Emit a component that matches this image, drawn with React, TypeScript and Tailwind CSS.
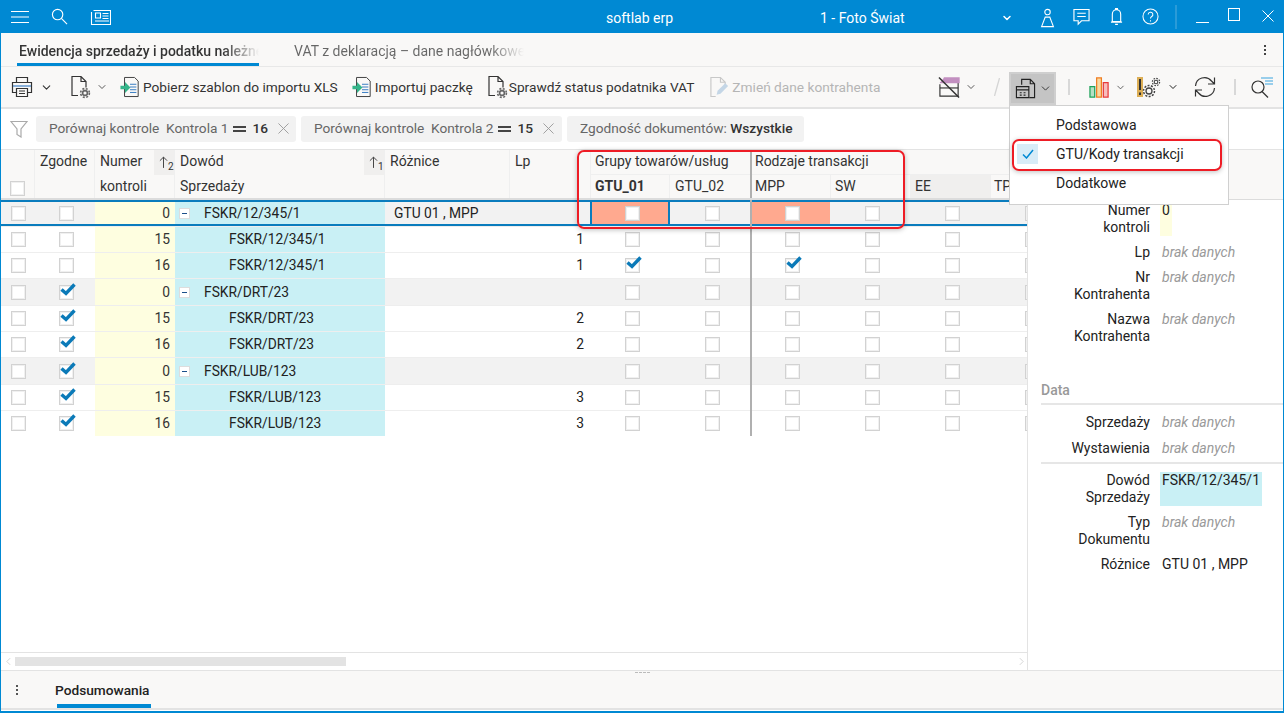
import { ChevronDown } from "lucide-react";

const columns = [
  { key: "sel", width: "w-[34px]" },
  { key: "zgodne", width: "w-[60px]" },
  { key: "numer", width: "w-[80px]" },
  { key: "dowod", width: "w-[210px]" },
  { key: "roznice", width: "w-[125px]" },
  { key: "lp", width: "w-[80px]" },
];

const rows = [
  { numer: "0", dowod: "FSKR/12/345/1", parent: true, zgodne: false, roznice: "GTU 01 , MPP", lp: "", gtu: false, mpp: false, selected: true },
  { numer: "15", dowod: "FSKR/12/345/1", parent: false, zgodne: false, roznice: "", lp: "1", gtu: false, mpp: false },
  { numer: "16", dowod: "FSKR/12/345/1", parent: false, zgodne: false, roznice: "", lp: "1", gtu: true, mpp: true },
  { numer: "0", dowod: "FSKR/DRT/23", parent: true, zgodne: true, roznice: "", lp: "", gtu: false, mpp: false },
  { numer: "15", dowod: "FSKR/DRT/23", parent: false, zgodne: true, roznice: "", lp: "2", gtu: false, mpp: false },
  { numer: "16", dowod: "FSKR/DRT/23", parent: false, zgodne: true, roznice: "", lp: "2", gtu: false, mpp: false },
  { numer: "0", dowod: "FSKR/LUB/123", parent: true, zgodne: true, roznice: "", lp: "", gtu: false, mpp: false },
  { numer: "15", dowod: "FSKR/LUB/123", parent: false, zgodne: true, roznice: "", lp: "3", gtu: false, mpp: false },
  { numer: "16", dowod: "FSKR/LUB/123", parent: false, zgodne: true, roznice: "", lp: "3", gtu: false, mpp: false },
];

const Box = ({ checked = false }: { checked?: boolean }) => (
  <span className="relative block w-[15px] h-[15px] bg-white border border-[#d2d2d2] shadow-[inset_0_0_0_1px_#f0f0f0]">
    {checked && (
      <svg viewBox="0 0 16 13" className="absolute left-0 -top-[3px] w-[16px] h-[13px]">
        <path d="M1.5 6.5 L6 10.5 L14.5 1.5" fill="none" stroke="#0b7ab8" strokeWidth="3.4" />
      </svg>
    )}
  </span>
);

const Cross = ({ className, color = "#999" }: { className: string; color?: string }) => (
  <svg viewBox="0 0 12 12" className={className} fill="none" stroke={color} strokeWidth="1">
    <path d="M0.5 0.5l11 11M11.5 0.5l-11 11" />
  </svg>
);

const DocGear = () => (
  <svg viewBox="0 0 22 24" className="w-[22px] h-[24px]" fill="none" stroke="#333" strokeWidth="1.2">
    <path d="M8 20.5H2V1.5h9l5 5v6M11 1.5v5h5" />
    <circle cx="15" cy="18" r="2.4" stroke="#666" strokeWidth="1.6" />
    <circle cx="15" cy="18" r="4.4" stroke="#666" strokeWidth="1.6" strokeDasharray="2 1.5" />
  </svg>
);

const ImportDoc = () => (
  <svg viewBox="0 0 22 24" className="w-[20px] h-[24px]" fill="none">
    <path d="M5 1.5h11l4 4v17H5z" stroke="#444" strokeWidth="1.1" />
    <path d="M11 9h7M11 12h7M11 15h7M11 18h7" stroke="#3b7fc4" strokeWidth="1.1" />
    <path d="M0.5 10.5h5v-4l6 6-6 6v-4h-5z" fill="#35b58a" />
  </svg>
);

const ToolButton = ({ label }: { label: string }) => (
  <span className="flex items-center gap-[3px] whitespace-nowrap">
    <ImportDoc />
    <span>{label}</span>
  </span>
);

const Chip = ({ children, width }: { children: React.ReactNode; width: string }) => (
  <div className={`${width} h-[26px] flex items-center bg-[#f2f2f2] rounded-[3px] pl-[13px] text-[13.7px] text-[#666] whitespace-nowrap`}>
    {children}
  </div>
);

const Equals = () => <span className="inline-block w-[13px] h-[6px] border-y-2 border-[#444] ml-[4px]" />;

const PanelRow = ({
  label,
  value,
  tint,
  className = "",
}: {
  label: React.ReactNode;
  value?: string;
  tint?: string;
  className?: string;
}) => (
  <div className={`flex leading-[17px] ${className}`}>
    <div className="w-[122px] text-right text-[#222] shrink-0">{label}</div>
    {tint ? (
      <div className={`ml-[10px] px-[2px] self-stretch ${tint} text-[#222]`}>{value}</div>
    ) : value ? (
      <div className="ml-[12px] text-[#222]">{value}</div>
    ) : (
      <div className="ml-[12px] italic text-[#999]">brak danych</div>
    )}
  </div>
);

const App = () => {
  return (
    <div className="relative w-[1284px] h-[713px] overflow-hidden flex flex-col bg-white text-[14px] text-[#333] font-['Roboto',sans-serif] border-x border-b-2 border-[#0089d3]">
      {/* Title bar */}
      <header className="-mx-px h-[33px] shrink-0 bg-[#0089d3] text-white flex items-center *:shrink-0">
        <svg viewBox="0 0 18 14" className="ml-[11px] w-[18px] h-[14px]" stroke="white" strokeWidth="1.2">
          <path d="M0 1.5h18M0 7h18M0 12.5h18" />
        </svg>
        <svg viewBox="0 0 18 18" className="ml-[22px] w-[17px] h-[17px]" fill="none" stroke="white" strokeWidth="1.2">
          <circle cx="7" cy="7" r="5.5" />
          <path d="M11 11l6 6" />
        </svg>
        <svg viewBox="0 0 21 18" className="ml-[22px] w-[21px] h-[18px]" fill="none" stroke="white" strokeWidth="1.1">
          <path d="M3.5 2.5h17v14H1.5V4" />
          <path d="M5.5 5h5v5h-5zM12.5 5.5h6M12.5 8h6M12.5 10.5h6M5 13h14" />
        </svg>
        <span className="ml-[495px] w-[70px] mt-[3px] whitespace-nowrap">softlab erp</span>
        <span className="ml-[144px] w-[84px] mt-[3px] whitespace-nowrap">1 - Foto Świat</span>
        <ChevronDown className="ml-[97px] w-[12px] h-[12px] mt-[3px]" strokeWidth={3} />
        <svg viewBox="0 0 16 22" className="ml-[27px] w-[15px] h-[20px] mt-[2px]" fill="none" stroke="white" strokeWidth="1.2">
          <circle cx="8" cy="4.5" r="3" />
          <path d="M5.5 10h5l4 10.5H1.5z" />
        </svg>
        <svg viewBox="0 0 18 18" className="ml-[18px] w-[17px] h-[18px]" fill="none" stroke="white" strokeWidth="1.2">
          <path d="M1 1h16v12H9l-3.5 3.5V13H1zM4.5 5h9M4.5 8.5h9" />
        </svg>
        <svg viewBox="0 0 14 20" className="ml-[20px] w-[13px] h-[20px]" fill="none" stroke="white" strokeWidth="1.2">
          <path d="M2.5 15V7a4.5 5 0 0 1 9 0v8zM1 15.5h12M5.5 18h3M6 2V1h2v1" />
        </svg>
        <svg viewBox="0 0 18 18" className="ml-[19px] w-[17px] h-[17px]" fill="none" stroke="white" strokeWidth="1.1">
          <circle cx="9" cy="9" r="8" />
          <path d="M6.5 7a2.5 2.5 0 1 1 3.5 2.3c-.7.4-1 .9-1 1.9M9 13v1.4" />
        </svg>
        <span className="ml-[16px] w-[2px] h-[24px] bg-[#2a9bd8]" />
        <span className="ml-[19px] w-[13px] h-px bg-white mt-[11px]" />
        <span className="ml-[19px] w-[12px] h-[13px] border border-white -mt-[4px]" />
        <Cross className="ml-[22px] w-[12px] h-[12px] -mt-[2px]" color="white" />
      </header>

      {/* Tabs */}
      <div className="h-[34px] shrink-0 bg-[#f9f8f7] flex items-stretch pl-[16px] border-b border-[#e8e8e8]">
        <div className="relative w-[242px] pt-[8px] pl-[2px] overflow-hidden whitespace-nowrap font-medium">
          <span className="block bg-gradient-to-r from-[#333] from-[85%] to-transparent bg-clip-text text-transparent">
            Ewidencja sprzedaży i podatku należne
          </span>
          <span className="absolute left-0 right-0 bottom-0 h-[3px] bg-[#0089d3]" />
        </div>
        <div className="ml-[35px] w-[230px] pt-[8px] overflow-hidden whitespace-nowrap">
          <span className="block bg-gradient-to-r from-[#666] from-[85%] to-transparent bg-clip-text text-transparent">
            VAT z deklaracją – dane nagłówkowe
          </span>
        </div>
        <div className="ml-auto mr-[17px] flex flex-col justify-center gap-[2px]">
          <span className="w-[2px] h-[2px] bg-[#444]" />
          <span className="w-[2px] h-[2px] bg-[#444]" />
          <span className="w-[2px] h-[2px] bg-[#444]" />
        </div>
      </div>

      {/* Toolbar */}
      <div className="h-[42px] shrink-0 bg-[#f9f8f7] flex items-center border-b-2 border-[#e3e3e3] whitespace-nowrap text-[13.7px] *:shrink-0">
        <svg viewBox="0 0 22 22" className="ml-[10px] w-[22px] h-[22px]" fill="none" stroke="#333" strokeWidth="1.2">
          <path d="M5.5 6V1.5h11V6M5.5 16.5H1.5V6.5h19v10h-4" />
          <path d="M5.5 12.5h11v8h-11zM8 15h6M8 17.5h6" />
          <path d="M2 10h18" stroke="#3b7fc4" />
        </svg>
        <ChevronDown className="ml-[7px] w-[13px] h-[13px] text-[#333]" strokeWidth={2} />
        <span className="ml-[17px]">
          <DocGear />
        </span>
        <ChevronDown className="ml-[4px] w-[12px] h-[12px] text-[#444]" strokeWidth={1.75} />
        <span className="ml-[12px]">
          <ToolButton label="Pobierz szablon do importu XLS" />
        </span>
        <span className="ml-[14px]">
          <ToolButton label="Importuj paczkę" />
        </span>
        <span className="ml-[14px] flex items-center">
          <DocGear />
          <span>Sprawdź status podatnika VAT</span>
        </span>
        <span className="ml-[15px] flex items-center gap-[2px] text-[#b5b5b5]">
          <svg viewBox="0 0 22 24" className="w-[21px] h-[24px]" fill="none">
            <path d="M7 22H2V2h10l5 5v4M12 2v5h5" stroke="#c8c8c8" strokeWidth="1.2" />
            <path d="M8 20l1-4 8-8 3 3-8 8z" fill="#c4d6e6" />
          </svg>
          Zmień dane kontrahenta
        </span>

        <svg viewBox="0 0 24 22" className="ml-[58px] w-[23px] h-[22px]" fill="none" stroke="#333" strokeWidth="1.2">
          <path d="M2 8V20.5H21V2" />
          <path d="M6 1.5h16v5H2" fill="#c28fc0" stroke="#c28fc0" />
          <path d="M2 12h19" />
          <path d="M1 1l21 21" strokeWidth="1.5" />
        </svg>
        <ChevronDown className="ml-[4px] w-[12px] h-[12px] text-[#444]" strokeWidth={1.75} />
        <svg viewBox="0 0 6 18" className="ml-[17px] w-[6px] h-[18px]" fill="none" stroke="#d5d5d5" strokeWidth="1.3">
          <path d="M5.5 0L0.5 18" />
        </svg>
        <div className="ml-[9px] w-[47px] h-[33px] self-start mt-[5px] bg-[#c4c4c4] border-2 border-[#cfcfcf] flex items-center pl-[4px] gap-[3px]">
          <svg viewBox="0 0 22 22" className="w-[21px] h-[21px] shrink-0" fill="none" stroke="#222" strokeWidth="1.2">
            <path d="M7 7V1.5h9l4.5 4.5v14.5H15M16 1.5V6h4.5" />
            <path d="M1.5 9h13v11.5h-13zM1.5 12.5h13M5 15.5h2M9 15.5h2M5 18h2M9 18h2" />
          </svg>
          <ChevronDown className="w-[13px] h-[13px] text-[#333] shrink-0" strokeWidth={1.75} />
        </div>
        <span className="ml-[12px] w-[2px] h-[16px] bg-[#d8d8d8]" />
        <svg viewBox="0 0 22 22" className="ml-[19px] w-[21px] h-[21px]" fill="none" strokeWidth="1.3">
          <path d="M1 10h5v11H1z" fill="#b5e0c4" stroke="#1fa25a" />
          <path d="M8 1h5v20H8z" fill="#fad9a0" stroke="#ef7d22" />
          <path d="M15 6h5v15h-5z" fill="#f7bcbc" stroke="#e83a3a" />
        </svg>
        <ChevronDown className="ml-[5px] w-[11px] h-[11px] text-[#444]" strokeWidth={1.75} />
        <svg viewBox="0 0 24 22" className="ml-[11px] w-[24px] h-[22px]" fill="none">
          <path d="M0 1h6v20H0z" fill="#dcae55" />
          <path d="M3 3v11M3 16.5v2.5" stroke="#333" strokeWidth="2" />
          <circle cx="12" cy="15" r="3" stroke="#444" strokeWidth="1.3" />
          <circle cx="12" cy="15" r="5.5" stroke="#444" strokeWidth="1.5" strokeDasharray="2 1.4" />
          <circle cx="19" cy="6" r="1.8" stroke="#444" strokeWidth="1.1" />
          <circle cx="19" cy="6" r="3.6" stroke="#444" strokeWidth="1.2" strokeDasharray="1.6 1.2" />
        </svg>
        <ChevronDown className="ml-[6px] w-[12px] h-[12px] text-[#222]" strokeWidth={2} />
        <svg viewBox="0 0 22 22" className="ml-[15px] w-[22px] h-[22px]" fill="none" stroke="#333" strokeWidth="1.2">
          <path d="M1.5 10a9 9 0 0 1 16-5l3 3M20.5 1.5V8h-6.5M20.5 12a9 9 0 0 1-16 5l-3-3M1.5 20.5V14H8" />
        </svg>
        <span className="ml-[18px] w-[2px] h-[16px] bg-[#d8d8d8]" />
        <svg viewBox="0 0 23 22" className="ml-[14px] w-[23px] h-[22px]" fill="none">
          <circle cx="8" cy="11" r="6" stroke="#333" strokeWidth="1.2" />
          <path d="M12 15.5l6 6" stroke="#333" strokeWidth="1.2" />
          <path d="M11 2h12M15 5h8M15 8h8" stroke="#3ba4e0" strokeWidth="1.2" />
        </svg>
      </div>

      {/* Filters */}
      <div className="h-[41px] shrink-0 bg-white flex items-center gap-[5px] border-b border-[#e3e3e3] pb-[1px]">
        <svg viewBox="0 0 18 18" className="ml-[9px] mr-[3px] w-[18px] h-[18px]" fill="none" stroke="#aaa" strokeWidth="1.2">
          <path d="M1 1.5h16l-6 7.5v8l-4-2.5V9z" />
        </svg>
        <Chip width="w-[260px]">
          Porównaj kontrole&nbsp; Kontrola 1
          <Equals />
          <span className="ml-[7px] font-medium text-[#333]">16</span>
          <Cross className="ml-[10px] w-[11px] h-[11px]" />
        </Chip>
        <Chip width="w-[261px]">
          Porównaj kontrole&nbsp; Kontrola 2
          <Equals />
          <span className="ml-[7px] font-medium text-[#333]">15</span>
          <Cross className="ml-[10px] w-[11px] h-[11px]" />
        </Chip>
        <Chip width="w-[237px]">
          Zgodność dokumentów:&nbsp;<span className="font-medium text-[#333]">Wszystkie</span>
        </Chip>
      </div>

      <div className="flex-1 min-h-0 flex">
        {/* Grid */}
        <div className="w-[1027px] shrink-0 flex flex-col border-r border-[#e3e3e3] overflow-hidden">
          <div className="h-[50px] shrink-0 flex bg-[#f9f8f7] border-b-2 border-[#dcdcdc] leading-[25px] *:shrink-0">
            <div className="w-[34px] border-r border-[#efefef] flex items-end pb-[2px] pl-[9px]">
              <Box />
            </div>
            <div className="w-[60px] -mt-px pl-[5px] border-r border-[#efefef]">Zgodne</div>
            <div className="relative w-[80px] -mt-px pl-[5px] border-r border-[#efefef]">
              Numer
              <br />
              kontroli
              <div className="absolute right-0 top-px w-[20px] h-[25px] bg-[#f0efee] flex pl-[5px] pt-[2px] leading-none">
                <svg viewBox="0 0 10 14" className="w-[9px] h-[13px] mt-[4px] shrink-0" fill="none" stroke="#444" strokeWidth="1.1">
                  <path d="M5 13V1M1 5l4-4 4 4" />
                </svg>
                <span className="mt-[10px] text-[10px]">2</span>
              </div>
            </div>
            <div className="relative w-[210px] -mt-px pl-[5px] border-r border-[#efefef]">
              Dowód
              <br />
              Sprzedaży
              <div className="absolute right-0 top-px w-[20px] h-[25px] bg-[#f0efee] flex pl-[5px] pt-[2px] leading-none">
                <svg viewBox="0 0 10 14" className="w-[9px] h-[13px] mt-[4px] shrink-0" fill="none" stroke="#444" strokeWidth="1.1">
                  <path d="M5 13V1M1 5l4-4 4 4" />
                </svg>
                <span className="mt-[10px] text-[10px]">1</span>
              </div>
            </div>
            <div className="w-[125px] -mt-px pl-[5px] border-r border-[#efefef]">Różnice</div>
            <div className="w-[80px] -mt-px pl-[5px]">Lp</div>
            <div className="w-[160px] border-l border-[#efefef]">
              <div className="h-[25px] leading-[23px] pl-[4px] border-b border-[#efefef]">Grupy towarów/usług</div>
              <div className="flex h-[23px] leading-[23px]">
                <div className="w-[79px] pl-[4px] border-r border-[#efefef] font-bold">GTU_01</div>
                <div className="w-[80px] pl-[5px]">GTU_02</div>
              </div>
            </div>
            <div className="w-[160px] border-l-2 border-[#b0b0b0]">
              <div className="h-[25px] leading-[23px] pl-[3px] border-b border-[#efefef]">Rodzaje transakcji</div>
              <div className="flex h-[23px] leading-[23px]">
                <div className="w-[79px] pl-[3px] border-r border-[#efefef]">MPP</div>
                <div className="w-[79px] pl-[4px]">SW</div>
              </div>
            </div>
            <div className="flex flex-col justify-end">
              <div className="flex h-[24px] leading-[23px] border-t border-[#efefef]">
                <div className="w-[80px] pl-[4px] bg-[#f0efee] border-l border-[#efefef] shrink-0">EE</div>
                <div className="w-[80px] pl-[3px] border-l border-[#efefef] shrink-0">TP</div>
              </div>
            </div>
          </div>

          <div className="flex-1 min-h-0 relative text-[13.8px]">
            {rows.map((row, index) => (
              <div
                key={index}
                className={`relative flex items-stretch w-[1106px] *:shrink-0 ${
                  index === 3 || index === 6 ? "h-[27px]" : "h-[26px]"
                } ${
                  row.selected
                    ? "bg-[#f2f2f2] border-y-2 border-[#0a7cbd]"
                    : row.parent
                      ? "bg-[#f2f2f2] border-t border-[#eeeeee]"
                      : "bg-white border-t border-[#eeeeee]"
                }`}
              >
                <div className={`${columns[0].width} flex items-center pl-[10px]`}>
                  <Box />
                </div>
                <div className={`${columns[1].width} flex items-center pl-[24px]`}>
                  <Box checked={row.zgodne} />
                </div>
                <div className={`${columns[2].width} bg-[#fefee0] flex items-center justify-end pr-[5px]`}>
                  {row.numer}
                </div>
                <div className={`${columns[3].width} bg-[#c9f0f5] flex items-center text-[#222]`}>
                  {row.parent ? (
                    <>
                      <span className="ml-[4px] w-[11px] h-[11px] bg-white border border-[#ddd] flex items-center justify-center">
                        <span className="w-[5px] h-px bg-[#1b4f8a]" />
                      </span>
                      <span className="ml-[14px]">{row.dowod}</span>
                    </>
                  ) : (
                    <span className="ml-[54px]">{row.dowod}</span>
                  )}
                </div>
                <div className={`${columns[4].width} flex items-center pl-[9px] text-[#222]`}>{row.roznice}</div>
                <div className={`${columns[5].width} flex items-center justify-end pr-[6px] text-[#222]`}>
                  {row.lp}
                </div>
                <div
                  className={`w-[80px] flex items-center ${
                    row.selected ? "bg-[#ffa98f] border-x-2 border-[#0a7cbd] pl-[33px]" : "pl-[35px]"
                  }`}
                >
                  <Box checked={row.gtu} />
                </div>
                <div className="w-[80px] flex items-center pl-[35px]">
                  <Box />
                </div>
                <div className={`w-[80px] flex items-center pl-[35px] ${row.selected ? "bg-[#ffa98f]" : ""}`}>
                  <Box checked={row.mpp} />
                </div>
                <div className="w-[80px] flex items-center pl-[35px]">
                  <Box />
                </div>
                <div className="w-[80px] flex items-center pl-[35px]">
                  <Box />
                </div>
                <div className="w-[80px] flex items-center pl-[35px]">
                  <Box />
                </div>
              </div>
            ))}
            {/* Group divider running through all rows */}
            <span className="absolute left-[749px] top-0 w-[2px] h-[236px] bg-[#b0b0b0]" />
          </div>

          {/* Horizontal scrollbar */}
          <div className="h-[18px] shrink-0 border-t border-[#e3e3e3] flex items-center">
            <svg viewBox="0 0 6 10" className="ml-[5px] w-[5px] h-[9px]" fill="none" stroke="#ccc" strokeWidth="1">
              <path d="M5 1L1 5l4 4" />
            </svg>
            <span className="ml-[4px] w-[331px] h-[9px] bg-[#e3e3e3]" />
            <svg viewBox="0 0 6 10" className="ml-auto mr-[3px] w-[5px] h-[9px]" fill="none" stroke="#ccc" strokeWidth="1">
              <path d="M1 1l4 4-4 4" />
            </svg>
          </div>
        </div>

        {/* Details panel */}
        <div className="flex-1 min-w-0 flex flex-col">
          <div className="h-[50px] shrink-0 bg-[#f9f8f7] border-b border-[#dcdcdc]" />
          <div className="pt-[2px]">
            <PanelRow
              label={
                <>
                  Numer
                  <br />
                  kontroli
                </>
              }
              value="0"
              tint="bg-[#fefee0]"
            />
            <PanelRow label="Lp" className="mt-[8px]" />
            <PanelRow
              label={
                <>
                  Nr
                  <br />
                  Kontrahenta
                </>
              }
              className="mt-[8px]"
            />
            <PanelRow
              label={
                <>
                  Nazwa
                  <br />
                  Kontrahenta
                </>
              }
              className="mt-[8px]"
            />
            <div className="mt-[35px] ml-[13px] h-[25px] font-medium text-[#999] border-b-2 border-[#e6e6e6]">Data</div>
            <PanelRow label="Sprzedaży" className="mt-[9px]" />
            <PanelRow label="Wystawienia" className="mt-[9px]" />
            <div className="mt-[5px] ml-[13px] h-[2px] bg-[#e6e6e6]" />
            <PanelRow
              label={
                <>
                  Dowód
                  <br />
                  Sprzedaży
                </>
              }
              value="FSKR/12/345/1"
              tint="bg-[#c9f0f5]"
              className="mt-[8px]"
            />
            <PanelRow
              label={
                <>
                  Typ
                  <br />
                  Dokumentu
                </>
              }
              className="mt-[8px]"
            />
            <PanelRow label="Różnice" value="GTU 01 , MPP" className="mt-[8px]" />
          </div>
        </div>
      </div>

      {/* Bottom tabs */}
      <div className="relative h-[40px] mb-[1px] shrink-0 bg-[#f9f8f7] border-t border-[#e3e3e3] border-b-2 border-b-[#e3e3e3] flex">
        <div className="ml-[14px] w-[4px] flex flex-col justify-center items-center gap-[2px]">
          <span className="w-[2px] h-[2px] bg-[#555]" />
          <span className="w-[2px] h-[2px] bg-[#555]" />
          <span className="w-[2px] h-[2px] bg-[#555]" />
        </div>
        <div className="relative ml-[38px] w-[94px] pt-[9px] text-[13.7px] font-medium text-[#222] whitespace-nowrap">
          <span className="-ml-[2px]">Podsumowania</span>
          <span className="absolute left-0 right-0 bottom-0 h-[4px] bg-[#0089d3]" />
        </div>
        <span className="absolute left-[634px] top-[1px] w-[15px] h-px border-t border-dashed border-[#bbb]" />
      </div>

      {/* Column menu */}
      <div className="absolute left-[1008px] top-[105px] w-[220px] h-[100px] bg-white border border-[#d0d0d0] pt-[7px]">
        <div className="h-[29px] pl-[46px] leading-[25px] text-[#222]">Podstawowa</div>
        <div className="relative h-[29px] pl-[46px] leading-[25px] text-[#222]">
          <span className="absolute left-[7px] top-[2px] w-[21px] h-[20px] bg-[#d8ecf7] flex items-center justify-center">
            <svg viewBox="0 0 12 10" className="w-[12px] h-[10px]" fill="none" stroke="#0089d3" strokeWidth="1.5">
              <path d="M1 5.5L4.5 9 11 1" />
            </svg>
          </span>
          GTU/Kody transakcji
        </div>
        <div className="h-[29px] pl-[46px] leading-[25px] text-[#222]">Dodatkowe</div>
      </div>

      {/* Red highlight frames */}
      <div className="absolute left-[576px] top-[150px] w-[328px] h-[79px] border-2 border-[#ee1c25] rounded-[7px] shadow-[0_1px_5px_rgba(0,0,0,0.25)]" />
      <div className="absolute left-[1011px] top-[139px] w-[210px] h-[32px] border-2 border-[#ee1c25] rounded-[7px] shadow-[0_1px_5px_rgba(0,0,0,0.25)]" />
    </div>
  );
};

export default App;
